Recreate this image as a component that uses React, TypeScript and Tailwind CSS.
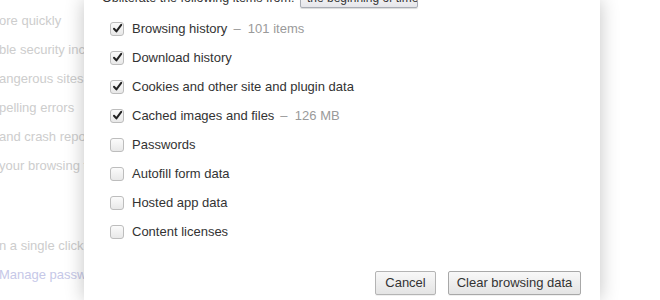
import React from "react";

const items = [
  { label: "Browsing history", note: "101 items", checked: true },
  { label: "Download history", checked: true },
  { label: "Cookies and other site and plugin data", checked: true },
  { label: "Cached images and files", note: "126 MB", checked: true },
  { label: "Passwords", checked: false },
  { label: "Autofill form data", checked: false },
  { label: "Hosted app data", checked: false },
  { label: "Content licenses", checked: false },
];

const behind = [
  "ore quickly",
  "ble security incidents",
  "angerous sites",
  "pelling errors",
  "and crash reports",
  "your browsing traffic",
];

function Checkbox({ checked }: { checked: boolean }) {
  return (
    <span className="w-[14px] h-[14px] rounded-[3px] border border-[#bdbdbd] bg-gradient-to-b from-[#fbfbfb] to-[#e8e8e8] flex items-center justify-center shrink-0">
      {checked && (
        <svg width="11" height="11" viewBox="0 0 11 11">
          <path d="M2 5.8 L4.4 8.4 L9.2 1.8" fill="none" stroke="#222" strokeWidth="2" strokeLinecap="round" strokeLinejoin="round" />
        </svg>
      )}
    </span>
  );
}

export default function App() {
  return (
    <div className="w-[660px] h-[300px] overflow-hidden bg-white flex font-['Liberation_Sans',Arial,sans-serif] text-[13px]">
      {/* Page behind the dialog */}
      <div className="w-[84px] shrink-0 overflow-hidden text-[#cdcdcd] whitespace-nowrap">
        <div className="pt-[11px] -ml-[1px]">
          {behind.map((t) => (
            <div key={t} className="h-[29px] leading-[20px]">
              {t}
            </div>
          ))}
          <div className="mt-[51px] h-[29px] leading-[20px]">n a single click.</div>
          <div className="h-[29px] leading-[20px] text-[#c6c8e8]">Manage passwords</div>
        </div>
      </div>

      {/* Dialog */}
      <div className="relative z-10 w-[516px] shrink-0 bg-white shadow-[0_0_18px_rgba(0,0,0,0.24)] text-[#333]">
        <div className="-mt-[12px] h-[20px] pl-[18px] flex items-center">
          <span className="w-[198px] shrink-0 whitespace-nowrap text-[12.5px]">Obliterate the following items from:</span>
          <span className="w-[118px] h-[20px] border border-[#a8acb4] rounded-[2px] bg-gradient-to-b from-[#fdfdfd] to-[#e6e6ea] px-[6px] text-[12px] leading-[18px] whitespace-nowrap overflow-hidden shadow-[0_1px_1px_rgba(0,0,0,0.15)]">
            the beginning of time
          </span>
        </div>

        <div className="mt-[6px] pl-[26px]">
          {items.map((it) => (
            <div key={it.label} className="h-[29px] flex items-center gap-[8px] whitespace-nowrap">
              <Checkbox checked={it.checked} />
              <span>
                {it.label}
                {it.note && <span className="text-[#9a9a9a] ml-[6px]">–&nbsp;&nbsp;{it.note}</span>}
              </span>
            </div>
          ))}
        </div>

        <div className="mt-[25px] pr-[19px] flex justify-end gap-[12px]">
          <button className="w-[61px] h-[24px] border border-[#b4b4b4] rounded-[2px] bg-gradient-to-b from-[#f8f8f8] to-[#e4e4e4] text-[#333] text-[13px] shadow-[0_1px_0_rgba(0,0,0,0.06)]">
            Cancel
          </button>
          <button className="w-[133px] h-[24px] border border-[#a8a8a8] rounded-[2px] bg-gradient-to-b from-[#f8f8f8] to-[#e4e4e4] text-[#333] text-[13px] shadow-[0_1px_0_rgba(0,0,0,0.06)]">
            Clear browsing data
          </button>
        </div>
      </div>

      <div className="flex-1 bg-white" />
    </div>
  );
}
